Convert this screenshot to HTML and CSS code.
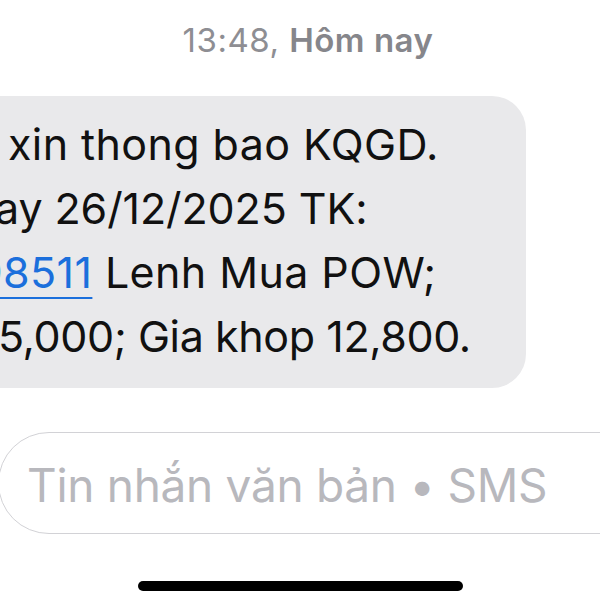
FILE: index.html
```html
<!DOCTYPE html>
<html lang="vi">
<head>
    <meta charset="UTF-8">
    <meta name="viewport" content="width=device-width, initial-scale=1.0">
    <title>Tin nhắn</title>
    <link rel="stylesheet" href="styles.css">
</head>
<body>
    <div class="thread">
        <div class="timestamp">13:48, <span class="day">Hôm nay</span></div>

        <div class="bubble">
            <span class="line l1">xin thong bao KQGD.</span>
            <span class="line l2">ay 26/12/2025 TK:</span>
            <span class="line l3"><a href="#" class="account">98511</a> Lenh Mua POW;</span>
            <span class="line l4">5,000; Gia khop 12,800.</span>
        </div>

        <div class="composer">
            <span class="placeholder">Tin nhắn văn bản • SMS</span>
        </div>

        <div class="home-bar"></div>
    </div>
</body>
</html>
```

FILE: styles.css
```css
body {
    margin: 0;
    background-color: #fff;
    font-family: Inter, "Noto Sans", sans-serif;
    overflow: hidden;
}

.thread {
    width: 600px;
    height: 600px;
    overflow: hidden;
}

.timestamp {
    padding-top: 20px;
    padding-left: 16px;
    text-align: center;
    font-size: 33px;
    line-height: 40px;
    color: #8e8e93;
    letter-spacing: 0.5px;
}

.timestamp .day {
    font-weight: 600;
    color: #86868b;
}

.bubble {
    margin-top: 36px;
    margin-left: -60px;
    width: 586px;
    box-sizing: border-box;
    padding: 16px 0 20px 60px;
    background-color: #e9e9eb;
    border-radius: 34px;
    font-size: 43px;
    line-height: 64px;
    color: #111;
    letter-spacing: -0.4px;
}

.line {
    display: block;
    white-space: nowrap;
}

.l1 {
    padding-left: 8px;
    letter-spacing: 0.4px;
}

.l2 {
    margin-left: -5px;
    letter-spacing: -0.1px;
}

.l3 {
    margin-left: -24px;
    letter-spacing: 0.4px;
}

.l4 {
    margin-left: -2px;
}

.account {
    color: #1b6fdc;
    text-decoration: underline;
    text-decoration-thickness: 2px;
    text-underline-offset: 9px;
}

.composer {
    margin-top: 44px;
    margin-left: -2px;
    width: 700px;
    height: 102px;
    box-sizing: border-box;
    border: 1.5px solid #d2d2d6;
    border-radius: 51px;
    display: flex;
    align-items: center;
    padding-left: 28px;
}

.placeholder {
    font-size: 46px;
    color: #b8b8bd;
    letter-spacing: -0.3px;
    white-space: nowrap;
    padding-top: 3px;
}

.home-bar {
    margin: 47px auto 0;
    width: 325px;
    height: 10px;
    border-radius: 5px;
    background-color: #000;
}
```
